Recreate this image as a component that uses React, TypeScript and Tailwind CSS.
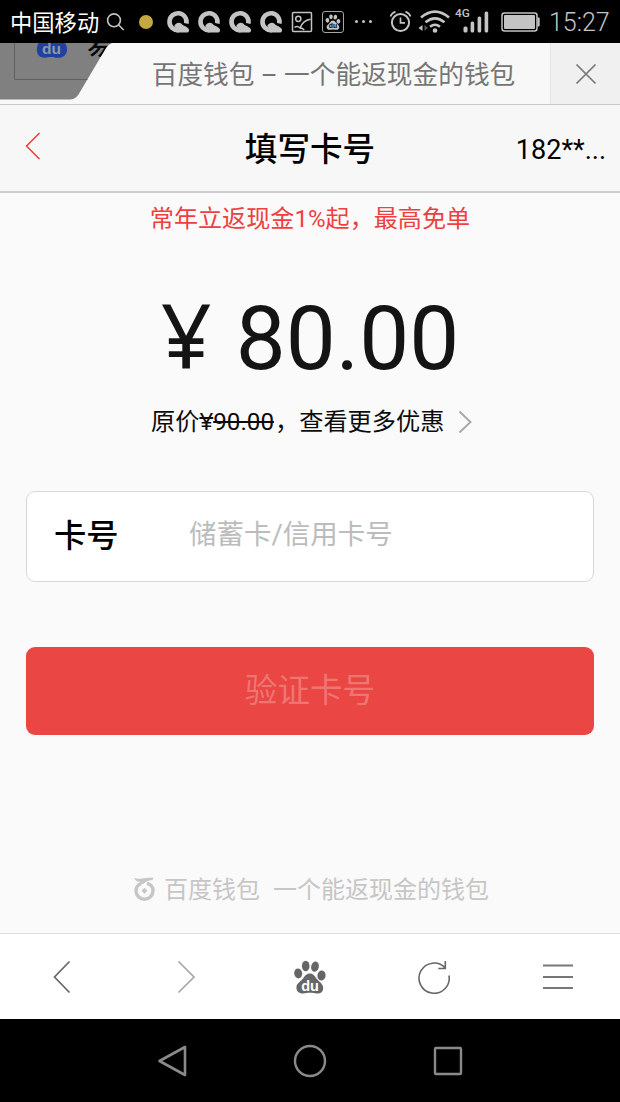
import React from 'react';

function QIcon() {
  return (
    <svg className="h-[24px] w-[24px] shrink-0" viewBox="0 0 24 24">
      <path d="M12.500 20.200A8.500 8.500 0 1 1 20.300 13.500" fill="none" stroke="#c4c4c4" strokeWidth="4.600" />
      <path d="M11.500 22.500c-1.600 0-2.300-1.500-1-2.400l2-1.200c-2-.4-3.700-1.200-4.300-2.900 1.900-3 4.900-4.200 7.300-2.200 1.300 1.300 2.200 2.200 3.500 2.200l2.600 1.700c1.300 1 1.600 1.900 1.400 3-.2 1.200-1 1.800-2.200 1.800z" fill="#c4c4c4" />
    </svg>
  );
}

function Paw({ className, color, ink }: { className: string; color: string; ink: string }) {
  return (
    <svg className={className} viewBox="0 0 34 34">
      <g fill={color}>
        <ellipse cx="5.200" cy="13.400" rx="4" ry="5" transform="rotate(-8 5.200 13.400)" />
        <ellipse cx="12.700" cy="6" rx="3.800" ry="5.200" />
        <ellipse cx="22" cy="6.600" rx="3.800" ry="5.200" transform="rotate(12 22 6.600)" />
        <ellipse cx="28.500" cy="15.500" rx="4.100" ry="5" transform="rotate(6 28.500 15.500)" />
        <path d="M17 13.600c2.600 0 4.400 2 6 4.300 2.400 3.300 7.200 5.300 7.200 10 0 4-2.600 5.600-6.200 5.600-2.600 0-4.200-.7-7-.7s-4.500.7-7.200.7c-4 0-6.400-2.300-6.400-6 0-4.400 4.700-5.900 7.200-9.700 1.500-2.400 3.400-4.200 6.400-4.200z" />
      </g>
      <text x="17" y="30.500" textAnchor="middle" fontFamily="Liberation Sans" fontWeight="700" fontSize="14.500" fill={ink}>du</text>
    </svg>
  );
}

function StatusBar() {
  return (
    <div className="flex h-[43px] shrink-0 items-center bg-black pl-[10px] text-[#c4c4c4]">
      <span className="w-[96px] shrink-0 whitespace-nowrap pt-[2px] text-[22.3px] leading-[30px] text-white">中国移动</span>
      <svg className="h-[20px] w-[20px] shrink-0" viewBox="0 0 20 20" fill="none" stroke="#c4c4c4" strokeWidth="1.600">
        <circle cx="8" cy="8.300" r="6.400" />
        <path d="M12.700 13l5 5" />
      </svg>
      <span className="ml-[13px] mr-[13px] h-[14px] w-[14px] shrink-0 rounded-full bg-[#c3a843]" />
      <div className="flex shrink-0 gap-[7px]">
        <QIcon />
        <QIcon />
        <QIcon />
        <QIcon />
      </div>
      <svg className="ml-[8px] h-[22px] w-[22px] shrink-0" viewBox="0 0 22 22" fill="none" stroke="#c4c4c4" strokeWidth="1.500">
        <rect x="1.500" y="1.500" width="19" height="19" rx="1" />
        <circle cx="7.300" cy="7.800" r="2.600" />
        <path d="M3.500 16.500c2-1.700 3.600-1.400 5.600.4C11 12 14.500 9 19.500 8.300M9 17c1.700-.3 3 .6 4.200 2" />
      </svg>
      <span className="ml-[9px] flex h-[22px] w-[22px] shrink-0 items-center justify-center rounded-[3px] border border-[#a5a5a5]">
        <Paw className="h-[16px] w-[16px]" color="#c4c4c4" ink="#000" />
      </span>
      <div className="ml-[11px] flex w-[17px] shrink-0 justify-between">
        <i className="h-[3px] w-[3px] rounded-full bg-[#c4c4c4]" />
        <i className="h-[3px] w-[3px] rounded-full bg-[#c4c4c4]" />
        <i className="h-[3px] w-[3px] rounded-full bg-[#c4c4c4]" />
      </div>
      <svg className="ml-[17px] h-[23px] w-[23px] shrink-0" viewBox="0 0 23 23" fill="none" stroke="#c4c4c4" strokeWidth="2">
        <circle cx="11.500" cy="12.500" r="8.600" />
        <path d="M11.500 7.500v5.300h4.500M1.500 6.500Q2.500 3 6.500 1.600M21.500 6.500Q20.500 3 16.500 1.600" strokeWidth="1.700" />
      </svg>
      <svg className="ml-[6px] h-[24px] w-[32px] shrink-0" viewBox="0 0 32 24" fill="none" stroke="#c4c4c4" strokeWidth="2.600">
        <path d="M3 7.500Q17 -4.300 31 7.500M7.500 12.300Q17 4.300 26.500 12.300M12 16.800Q17 12.700 22 16.800" />
        <circle cx="17" cy="20.500" r="2.300" fill="#c4c4c4" stroke="none" />
        <path d="M4.500 15v6L.5 18z" fill="#c4c4c4" stroke="none" />
        <path d="M6.500 15v6l3.500-3z" fill="#555" stroke="none" />
      </svg>
      <svg className="ml-[5px] h-[34px] w-[36px] shrink-0" viewBox="0 0 36 34">
        <text x="0" y="11.800" fontFamily="Roboto" fontWeight="500" fontSize="11.800" fill="#c4c4c4">4G</text>
        <g fill="#c4c4c4">
          <rect x="8.500" y="21.500" width="4" height="6" rx="1.500" />
          <rect x="15.600" y="16.500" width="3.600" height="11" rx="1.500" />
          <rect x="22.600" y="11.500" width="3.600" height="16" rx="1.500" />
          <rect x="29.600" y="6.500" width="3.600" height="21" rx="1.500" />
        </g>
      </svg>
      <svg className="ml-[10px] h-[20px] w-[40px] shrink-0" viewBox="0 0 40 20">
        <rect x="1" y="1" width="35" height="18" rx="2.500" fill="none" stroke="#c4c4c4" strokeWidth="1.500" />
        <rect x="3" y="3" width="31" height="14" rx="1" fill="#c4c4c4" />
        <path d="M36.500 5.500h1.200q1 0 1 1v7q0 1-1 1h-1.200z" fill="#c4c4c4" />
      </svg>
      <span className="ml-[8px] whitespace-nowrap pt-[3px] text-[25px] font-light leading-[30px]">15:27</span>
    </div>
  );
}

function TabStrip() {
  return (
    <div className="flex h-[62px] shrink-0 border-b border-[#c8c8c8] bg-[#f8f8f8]">
      <svg className="h-[61px] w-[120px] shrink-0" viewBox="0 0 120 61">
        <defs>
          <clipPath id="tab">
            <path d="M0 0H112.500Q108.500 1 106 5L78.500 51.500Q75 56.500 70 56.500H0z" />
          </clipPath>
        </defs>
        <g clipPath="url(#tab)">
          <rect width="120" height="57" fill="#808080" />
          <path d="M14.500 0V36.500H100" fill="none" stroke="#5e6068" strokeWidth="1" />
          <path d="M38.500 0H65c4 6 2 13-4 14.500-5 .8-6-.5-9.500-.5s-6 1.300-10 .3C36 12.500 36 5 38.500 0z" fill="#1d429f" />
          <text x="51.500" y="11.200" textAnchor="middle" fontFamily="Liberation Sans" fontWeight="700" fontSize="15.500" fill="#8f98aa">du</text>
          <text x="87" y="12" fontFamily="Noto Sans CJK SC" fontSize="28" fontWeight="500" fill="#080808">易</text>
        </g>
      </svg>
      <div className="flex flex-1 justify-center pr-[3px] pt-[14px]">
        <span className="whitespace-pre text-[25.700px] leading-[36px] text-[#757575]">百度钱包 – 一个能返现金的钱包</span>
      </div>
      <div className="flex w-[70px] items-center justify-center border-l border-[#e3e3e3] bg-[#f0f0f0]">
        <svg className="h-[22px] w-[22px]" viewBox="0 0 22 22" fill="none" stroke="#777" strokeWidth="1.700">
          <path d="M1.500 1.500l19 19M20.500 1.500l-19 19" />
        </svg>
      </div>
    </div>
  );
}

function Header() {
  return (
    <div className="grid h-[88px] shrink-0 grid-cols-[1fr_auto_1fr] items-center border-b-2 border-[#cecece] bg-[#f7f7f7] pl-[25px] pr-[14px]">
      <svg className="mb-[5px] h-[28px] w-[16px]" viewBox="0 0 16 28" fill="none" stroke="#ec3c3a" strokeWidth="1.500">
        <path d="M14.500 1L1.500 14l13 13" />
      </svg>
      <h1 className="-ml-[11px] pt-[3px] text-[32.600px] font-medium leading-[44px] text-black">填写卡号</h1>
      <span className="pt-[3px] text-right text-[27px] leading-[44px] text-black">182**...</span>
    </div>
  );
}

function Payment() {
  return (
    <main className="flex flex-1 flex-col bg-[#fafafa] px-[26px]">
      <p className="mt-[8px] text-center text-[24.100px] leading-[36px] text-[#ee4040]">常年立返现金1%起，最高免单</p>
      <p className="mt-[47px] h-[110px] whitespace-pre text-center text-[89px] leading-[110px] text-[#141414]">
        <span className="mr-[2px] font-['Noto_Sans'] leading-[0]">¥</span> 80.00
      </p>
      <div className="mt-[10px] flex h-[36px] items-center pl-[125px] text-[24.200px] leading-[36px] text-[#0c0c0c]">
        <span className="whitespace-nowrap">原价<s><span className="font-['Noto_Sans'] leading-[0]">¥</span>90.00</s><span className="ml-px">，查看更多优惠</span></span>
        <svg className="ml-[14px] h-[24px] w-[15px]" viewBox="0 0 15 24" fill="none" stroke="#a6a6a6" strokeWidth="1.800">
          <path d="M1.500 1.500L12.500 12l-11 10.500" />
        </svg>
      </div>
      <label className="mt-[51px] flex h-[91px] shrink-0 rounded-[9px] border-[1.500px] border-[#d8d8d8] bg-white pl-[27px]">
        <span className="w-[135px] pt-[22px] text-[32.300px] font-medium leading-[44px] text-black">卡号</span>
        <span className="pt-[21px] text-[27.500px] leading-[44px] text-[#bcbcbc]">储蓄卡/信用卡号</span>
      </label>
      <button className="mt-[65px] h-[88px] shrink-0 rounded-[9px] bg-[#ea4644] text-[32.600px] leading-[44px] text-[#ef7573]">验证卡号</button>
      <div className="mt-[137px] flex items-center pl-[107px] text-[24px] leading-[36px] text-[#c6c6c6]">
        <svg className="mb-[3px] mr-[8px] h-[25px] w-[23px]" viewBox="0 0 23 25" fill="none" stroke="#c6c6c6">
          <path d="M8 7.500C4.500 9 3 11.500 3 14.800a8.500 8.500 0 1 0 17 0c0-3.500-2-6.500-6-7.500" strokeWidth="3.400" />
          <path d="M1.200 1.700C6 4 13 1.700 20.500 1.600l-1 2.300c-4.500.3-7 1.600-9.500 4.100H5.500C7 6.500 7 6.300 7 5.700 4 5.600 1.900 4.300 1.200 1.700z" fill="#c6c6c6" stroke="none" />
          <path d="M11.500 11.800l3 3-3 3-3-3z" fill="#c6c6c6" stroke="none" />
        </svg>
        <span>百度钱包</span>
        <span className="ml-[13px]">一个能返现金的钱包</span>
      </div>
    </main>
  );
}

function Toolbar() {
  return (
    <nav className="grid h-[86px] shrink-0 grid-cols-5 items-center justify-items-center border-t border-[#dedede] bg-white">
      <svg className="h-[34px] w-[34px]" viewBox="0 0 34 34" fill="none" stroke="#666" strokeWidth="1.700">
        <path d="M24.500 1.500L9.500 17l15 15.500" />
      </svg>
      <svg className="h-[34px] w-[34px]" viewBox="0 0 34 34" fill="none" stroke="#a8a8a8" strokeWidth="1.700">
        <path d="M9.500 1.500L25 17 9.500 32.500" />
      </svg>
      <Paw className="h-[34px] w-[34px]" color="#666" ink="#fff" />
      <svg className="h-[34px] w-[34px]" viewBox="0 0 34 34" fill="none" stroke="#666" strokeWidth="1.600">
        <path d="M32 15.500A15.100 15.100 0 1 1 28.300 8M28.300 1v7.500h-7" />
      </svg>
      <svg className="h-[34px] w-[34px]" viewBox="0 0 34 34" fill="none" stroke="#777" strokeWidth="1.800">
        <path d="M2 5.500h30M2 17h30M2 28h30" />
      </svg>
    </nav>
  );
}

function SystemNav() {
  return (
    <nav className="flex h-[83px] shrink-0 items-center justify-center gap-[102px] bg-black">
      <svg className="h-[36px] w-[36px]" viewBox="0 0 36 36" fill="none" stroke="#8a8a8a" strokeWidth="2.600" strokeLinejoin="round">
        <path d="M31 4v28L5.500 18z" />
      </svg>
      <svg className="h-[36px] w-[36px]" viewBox="0 0 36 36" fill="none" stroke="#8a8a8a" strokeWidth="2.400">
        <circle cx="18" cy="18" r="15" />
      </svg>
      <svg className="h-[36px] w-[36px]" viewBox="0 0 36 36" fill="none" stroke="#8a8a8a" strokeWidth="2.400">
        <rect x="5" y="5" width="26" height="26" rx="1" />
      </svg>
    </nav>
  );
}

export default function App() {
  return (
    <div className="flex h-[1102px] w-[620px] flex-col overflow-hidden font-['Roboto','Noto_Sans_CJK_SC',sans-serif]">
      <StatusBar />
      <TabStrip />
      <Header />
      <Payment />
      <Toolbar />
      <SystemNav />
    </div>
  );
}
